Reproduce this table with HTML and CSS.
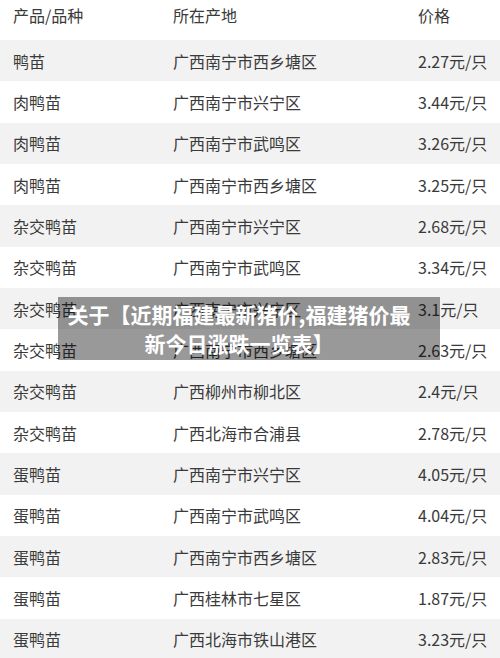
FILE: index.html
```html
<!DOCTYPE html>
<html lang="zh-CN">
<head>
<meta charset="utf-8">
<title>鸭苗价格</title>
<link rel="stylesheet" href="styles.css">
</head>
<body>
<div class="page">
  <div class="table">
    <div class="row head"><span>产品/品种</span><span>所在产地</span><span>价格</span></div>
    <div class="row odd"><span>鸭苗</span><span>广西南宁市西乡塘区</span><span>2.27元/只</span></div>
    <div class="row"><span>肉鸭苗</span><span>广西南宁市兴宁区</span><span>3.44元/只</span></div>
    <div class="row odd"><span>肉鸭苗</span><span>广西南宁市武鸣区</span><span>3.26元/只</span></div>
    <div class="row"><span>肉鸭苗</span><span>广西南宁市西乡塘区</span><span>3.25元/只</span></div>
    <div class="row odd"><span>杂交鸭苗</span><span>广西南宁市兴宁区</span><span>2.68元/只</span></div>
    <div class="row"><span>杂交鸭苗</span><span>广西南宁市武鸣区</span><span>3.34元/只</span></div>
    <div class="row odd"><span>杂交鸭苗</span><span>广西南宁市兴宁区</span><span>3.1元/只</span></div>
    <div class="row"><span>杂交鸭苗</span><span>广西南宁市西乡塘区</span><span>2.63元/只</span></div>
    <div class="row odd"><span>杂交鸭苗</span><span>广西柳州市柳北区</span><span>2.4元/只</span></div>
    <div class="row"><span>杂交鸭苗</span><span>广西北海市合浦县</span><span>2.78元/只</span></div>
    <div class="row odd"><span>蛋鸭苗</span><span>广西南宁市兴宁区</span><span>4.05元/只</span></div>
    <div class="row"><span>蛋鸭苗</span><span>广西南宁市武鸣区</span><span>4.04元/只</span></div>
    <div class="row odd"><span>蛋鸭苗</span><span>广西南宁市西乡塘区</span><span>2.83元/只</span></div>
    <div class="row"><span>蛋鸭苗</span><span>广西桂林市七星区</span><span>1.87元/只</span></div>
    <div class="row odd"><span>蛋鸭苗</span><span>广西北海市铁山港区</span><span>3.23元/只</span></div>
  </div>
  <div class="caption">关于【近期福建最新猪价,福建猪价最新今日涨跌一览表】</div>
</div>
</body>
</html>
```
FILE: styles.css
```css
html, body {
  margin: 0;
  padding: 0;
  background: #fff;
}
body {
  font-family: "Noto Sans CJK SC", "Noto Sans", sans-serif;
  color: #3a3a3a;
  font-size: 16px;
}
.page {
  position: relative;
  width: 500px;
  height: 658px;
  overflow: hidden;
}
.table {
  display: flex;
  flex-direction: column;
}
.row {
  display: grid;
  grid-template-columns: 160px 245px 1fr;
  padding-left: 13px;
  height: 41.35px;
  align-items: center;
  white-space: nowrap;
}
.row.head {
  height: 40px;
  align-items: start;
  line-height: 30px;
}
.row.odd {
  background: #f2f2f2;
}
.caption {
  position: absolute;
  left: 58px;
  top: 297px;
  width: 350px;
  height: 63px;
  padding: 0 26px 0 6px;
  background: rgba(0, 0, 0, 0.4);
  color: #fff;
  font-weight: bold;
  font-size: 21px;
  line-height: 29px;
  text-align: center;
  display: flex;
  align-items: center;
  justify-content: center;
}
```
